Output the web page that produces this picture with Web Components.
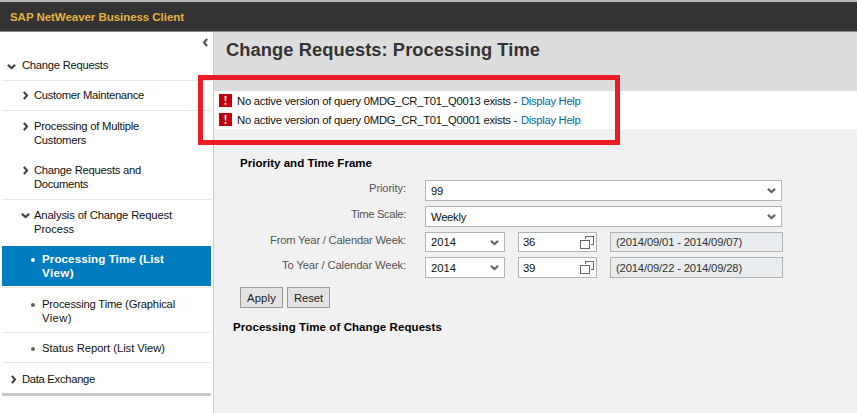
<!DOCTYPE html>
<html lang="en"><head><meta charset="utf-8"><title>SAP NetWeaver Business Client</title>
<style>
html,body{margin:0;height:100%;overflow:hidden}
body{font:11.25px/14px "Liberation Sans",Arial,sans-serif;color:#111}
</style></head><body><nwbc-app></nwbc-app>
<script>
const define=(name,css,html,setup)=>customElements.define(name,class extends HTMLElement{
  connectedCallback(){
    if(this.shadowRoot)return;
    const root=this.attachShadow({mode:'open'});
    root.innerHTML=`<style>:host{display:block;box-sizing:border-box}*{box-sizing:border-box}${css}</style>${typeof html==='function'?html(this):html}`;
    if(setup)setup(this,root);
  }
});
/* Text run whose tracking is adjusted to a given advance width */
define('fit-text',':host{display:inline-block;white-space:pre;vertical-align:top}','<slot></slot>',el=>{
  const w=+el.getAttribute('w'),n=el.textContent.length;
  const natural=el.getBoundingClientRect().width;
  el.style.letterSpacing=((w-natural)/n).toFixed(3)+'px';
});
define('chevron-icon',':host{width:9px;height:9px}svg{display:block}:host([dir=right]) svg{transform:rotate(-90deg)}:host([dir=left]) svg{transform:rotate(90deg)}',
 '<svg width="9" height="9" viewBox="0 0 9 9"><path d="M.9 2.9 4.5 6 8.1 2.9" fill="none" stroke="currentColor" stroke-width="2.2"/></svg>');
define('alert-icon',':host{width:13px;height:13px}svg{display:block}',
 '<svg width="13" height="13" viewBox="0 0 13 13"><path fill="#c4000f" d="M0 0h13v13H0z"/><path fill="#fff" d="M5.5 2h2l-.4 5.5H5.9zM5.6 9h1.8v1.8H5.6z"/></svg>');
define('value-help-icon',':host{width:14px;height:13px}svg{display:block}',
 '<svg width="14" height="13" viewBox="0 0 14 13" fill="none" stroke="#666" shape-rendering="crispEdges"><path d="M.5 4.5h9v8h-9zM5.5 3V.5h8v8H11"/></svg>');
define('nav-item',`
:host{position:relative;margin:0 2px;height:var(--h);padding:var(--t) 0 0 calc(var(--x) - 2px);border-bottom:1px solid transparent}
:host([line]){border-color:#e6e6e6}
:host([selected]){background:#007dc1;color:#fff;font-weight:bold;font-size:11.6px;border:0}
.mark{position:absolute;left:calc(var(--x) - 17px);top:calc(var(--t) + 4px);color:#444}
:host([inner]) .mark{left:calc(var(--x) - 15px);top:calc(var(--t) + 3px)}
:host([kind=right]) .mark{left:calc(var(--x) - 15px);top:calc(var(--t) + 3px)}
.dot{position:absolute;left:calc(var(--x) - 13px);top:calc(var(--t) + 6px);width:4px;height:4px;border-radius:2px;background:#666}
:host([selected]) .dot{background:#fff}
::slotted(fit-text){display:table!important}`,
 el=>{const k=el.getAttribute('kind');return (k==='dot'?'<span class="dot"></span>':`<chevron-icon class="mark" dir="${k}"></chevron-icon>`)+'<slot></slot>'});
define('side-nav',`:host{width:214px;background:#fff;border-right:1px solid #ccc;padding-top:6px}
.top{height:12px;padding-left:201px;color:#555}.end{height:3px;margin:0 2px;background:#c8c8c8}.gap{height:2px;margin:0 2px;border-bottom:1px solid #e6e6e6}.tree{color:#111}`,
`<div class="top"><chevron-icon dir="left"></chevron-icon></div><div class="tree">
<nav-item line kind="down" style="--h:31px;--t:8px;--x:22px"><fit-text w="86">Change Requests</fit-text></nav-item>
<nav-item line kind="right" style="--h:30px;--t:7px;--x:34px"><fit-text w="110">Customer Maintenance</fit-text></nav-item>
<nav-item kind="right" style="--h:44px;--t:8px;--x:34px"><fit-text w="105">Processing of Multiple</fit-text><fit-text w="52">Customers</fit-text></nav-item>
<nav-item line kind="right" style="--h:45px;--t:8px;--x:34px"><fit-text w="107">Change Requests and</fit-text><fit-text w="54">Documents</fit-text></nav-item>
<nav-item inner kind="down" style="--h:46px;--t:8px;--x:34px"><fit-text w="138">Analysis of Change Request</fit-text><fit-text w="40">Process</fit-text></nav-item>
<nav-item selected kind="dot" style="--h:40px;--t:6px;--x:42px"><fit-text w="122">Processing Time (List</fit-text><fit-text w="32">View)</fit-text></nav-item>
<div class="gap"></div>
<nav-item line kind="dot" style="--h:45px;--t:9px;--x:42px"><fit-text w="133">Processing Time (Graphical</fit-text><fit-text w="30">View)</fit-text></nav-item>
<nav-item line kind="dot" style="--h:30px;--t:8px;--x:42px"><fit-text w="123">Status Report (List View)</fit-text></nav-item>
<nav-item kind="right" style="--h:30px;--t:9px;--x:22px"><fit-text w="73">Data Exchange</fit-text></nav-item>
</div><div class="end"></div>`);
define('message-row',`:host{display:flex;height:19px;padding:3px 0 0 5px}alert-icon{margin-right:5px}.link{color:#00679e;margin-left:1px}`,
`<alert-icon></alert-icon><slot></slot><fit-text class="link" w="59.5">Display Help</fit-text>`);
define('form-field',`:host{display:flex;align-items:center;justify-content:space-between;height:21px;border:1px solid #b3b3b3;background:#fff;padding:0 5px}
:host([readonly]){background:#e8ecef;color:#333}:host([kind=help]){padding:0 2px 0 4px}chevron-icon{color:#666}`,
 el=>'<slot></slot>'+({select:'<chevron-icon></chevron-icon>',help:'<value-help-icon></value-help-icon>'}[el.getAttribute('kind')]||''));
define('form-row',`:host{display:grid;grid-template-columns:192px 1fr;height:var(--h,26px)}
.label{text-align:right;padding:1px 0 0;color:#555}.fields{display:flex;padding-left:19px}`,
`<div class="label"><slot name="label"></slot></div><div class="fields"><slot></slot></div>`);
define('push-button',`:host{display:flex;align-items:center;justify-content:center;width:43px;height:21px;border:1px solid #999;background:#e3e3e3;color:#222}`,'<slot></slot>');
define('work-area',`:host{flex:1;min-width:0;background:#f1f1f1}
h1{margin:0;height:59px;background:#ddd;padding:6px 0 0 12px;font-size:18.3px;line-height:24px;color:#333}
.messages{height:38px;background:#fff}
h2{font-size:11.5px;line-height:14px;margin:0;color:#000}
.form{padding:27px 0 0}.form h2{padding-left:26px;height:24px}.buttons{display:flex;gap:4px;padding-left:26px;height:37px;padding-top:4px}.result{padding-left:19px}
push-button,form-field{flex:none}`,
`<h1><fit-text w="314">Change Requests: Processing Time</fit-text></h1>
<div class="messages">
<message-row><fit-text w="283">No active version of query 0MDG_CR_T01_Q0013 exists - </fit-text></message-row>
<message-row><fit-text w="283">No active version of query 0MDG_CR_T01_Q0001 exists - </fit-text></message-row></div>
<div class="form"><h2><fit-text w="132">Priority and Time Frame</fit-text></h2>
<form-row><fit-text slot="label" w="37">Priority:</fit-text><form-field kind="select" style="width:357px"><fit-text w="12">99</fit-text></form-field></form-row>
<form-row><fit-text slot="label" w="55">Time Scale:</fit-text><form-field kind="select" style="width:357px"><fit-text w="35">Weekly</fit-text></form-field></form-row>
<form-row style="--h:25px"><fit-text slot="label" w="136">From Year / Calendar Week:</fit-text><form-field kind="select" style="width:80px;height:20px"><fit-text w="25">2014</fit-text></form-field><form-field kind="help" style="width:79px;height:20px;margin-left:13px"><fit-text w="12">36</fit-text></form-field><form-field readonly style="width:173px;height:20px;margin-left:13px"><fit-text w="126">(2014/09/01 - 2014/09/07)</fit-text></form-field></form-row>
<form-row><fit-text slot="label" w="124">To Year / Calendar Week:</fit-text><form-field kind="select" style="width:80px"><fit-text w="25">2014</fit-text></form-field><form-field kind="help" style="width:79px;margin-left:13px"><fit-text w="12">39</fit-text></form-field><form-field readonly style="width:173px;margin-left:13px"><fit-text w="126">(2014/09/22 - 2014/09/28)</fit-text></form-field></form-row>
</div><div class="buttons"><push-button><fit-text w="29">Apply</fit-text></push-button><push-button><fit-text w="29">Reset</fit-text></push-button></div>
<h2 class="result"><fit-text w="209">Processing Time of Change Requests</fit-text></h2>`);
define('app-header',`:host{height:32px;background:#333;border-top:2px solid #b8b8b8;border-bottom:1px solid #8c8c8c;padding:8px 0 0 10px;color:#e5b23c;font-weight:bold;font-size:11.5px}`,
`<fit-text w="174">SAP NetWeaver Business Client</fit-text>`);
define('nwbc-app',`:host{position:relative;display:flex;flex-direction:column;width:857px;height:413px}
.body{display:flex;flex:1}.callout{position:absolute;left:198px;top:75px;width:422px;height:70px;border:5px solid #eb1c24}`,
`<app-header></app-header><div class="body"><side-nav></side-nav><work-area></work-area></div><div class="callout"></div>`);
</script></body></html>
